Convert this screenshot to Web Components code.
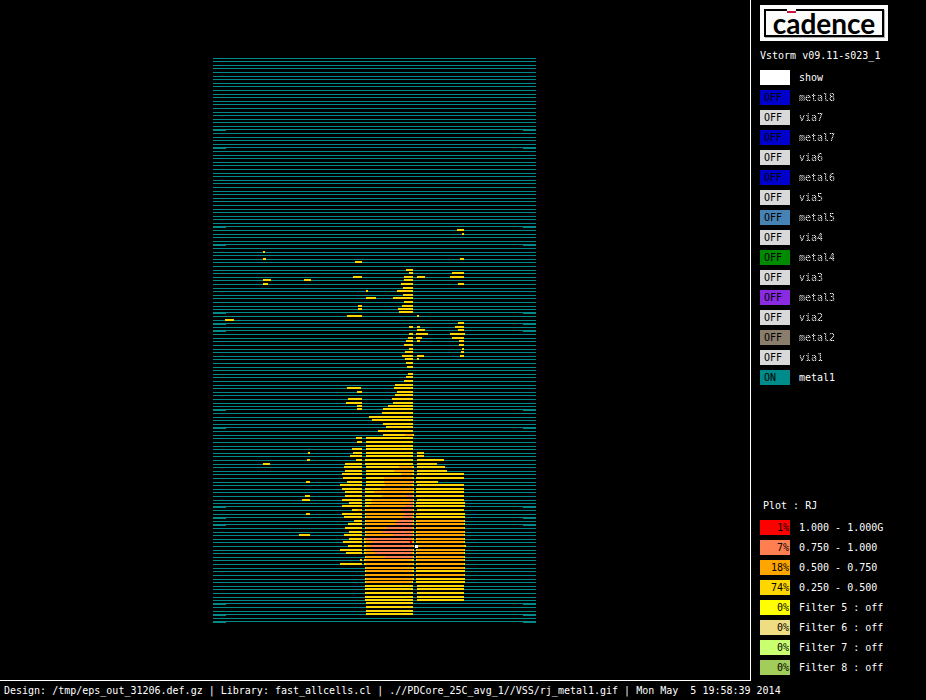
<!DOCTYPE html>
<html lang="en">
<head>
<meta charset="utf-8">
<title>Vstorm</title>
<style>
html, body { height: 100%; margin: 0; background: #000; }
body { color: #fff; font: 10px/14px "DejaVu Sans Mono", monospace; }
</style>
</head>
<body>
<vstorm-app></vstorm-app>
<script>
function define(name, html, setup) {
  const template = document.createElement('template');
  template.innerHTML = html;
  customElements.define(name, class extends HTMLElement {
    constructor() {
      super();
      this.attachShadow({ mode: 'open' }).append(template.content.cloneNode(true));
    }
    connectedCallback() {
      if (setup && !this.ready) { this.ready = true; setup(this, this.shadowRoot); }
    }
  });
}

define('brand-logo', `
<style>
:host { display: block; width: 128px; height: 36px; background: #fcfcfc; padding: 4px; box-sizing: border-box; }
.frame { position: relative; height: 100%; box-sizing: border-box; border: 2px solid #000;
  display: flex; align-items: center; justify-content: center; box-shadow: 1px 1px #aaa;
  color: #000; font: bold 28px/24px Lato, sans-serif; }
.bar { position: absolute; left: 21px; top: -2px; width: 9px; height: 2px; background: #fcfcfc; border-bottom: 2px solid #d0103a; }
</style>
<div class="frame"><span>cadence</span><span class="bar"></span></div>`);

define('swatch-row', `
<style>
:host { display: flex; align-items: center; gap: 9px; height: 15px; }
button { width: 30px; height: 15px; flex: none; margin: 0; border: 0; border-radius: 0; padding: 0 0 0 4px;
  font: inherit; color: #000; text-align: left; white-space: pre; }
:host([percent]) button { text-align: right; padding: 0 1px 0 0; }
label { white-space: pre; }
:host([off]) label { -webkit-mask: repeating-conic-gradient(#000 0 25%, #0006 0 50%) 0 0 / 2px 2px;
  mask: repeating-conic-gradient(#000 0 25%, #0006 0 50%) 0 0 / 2px 2px; }
</style>
<button id="b" type="button"></button><label for="b"><slot></slot></label>`, (host, root) => {
  const b = root.querySelector('button');
  b.textContent = host.getAttribute('state') || '';
  b.style.background = host.getAttribute('color');
});

define('rail-plot', `
<style>:host { display: block; line-height: 0; }</style>
<svg width="324" height="566" viewBox="213 57 324 566" shape-rendering="crispEdges" role="img" aria-label="RJ plot of metal1"></svg>`, (host, root) => {
  const svg = root.querySelector('svg');
  const rect = (x, y, w, h, fill) => {
    const r = document.createElementNS('http://www.w3.org/2000/svg', 'rect');
    for (const [k, v] of Object.entries({ x, y, width: w, height: h, fill })) r.setAttribute(k, v);
    svg.append(r);
  };
  // Rails repeat every 97 units in groups of 27, with a few rounded down by one.
  const group = [58, 61, 65, 68, 72, 76, 79, 83, 86, 90, 94, 97, 101, 104, 108, 112, 115, 119, 122, 126, 129, 133, 137, 140, 144, 147, 151];
  const rounded = [313, 331, 410, 428, 507, 525, 543, 561, 604, 622];
  const rails = Array.from({ length: 158 }, (_, k) => {
    const y = group[k % 27] + 97 * Math.floor(k / 27);
    return rounded.includes(y) ? y - 1 : y;
  });
  const strapped = [129, 147, 226, 244, 312, 323, 330, 409, 427, 506, 517, 524, 603, 614, 621];
  const nearest = y => rails.reduce((a, b) => Math.abs(b - y) < Math.abs(a - y) ? b : a);
  for (const y of rails) rect(213, y, 323, 1, '#008b8b');
  for (const s of strapped) {
    const y = nearest(s);
    rect(213, y, 13, 2, '#008b8b');
    rect(523, y, 13, 2, '#008b8b');
  }
  const fills = { y: '#ffd700', o: '#ffa500', c: '#ff7f50', r: '#ff0000' };
  // Each line: rail position, then spans start-end with an optional class letter.
  const data = `
230 457-464
234 462-464
252 263-265
259 263-266 460-464
262 355-362
270 406-413
273 409-413 452-464
277 353-362 404-413 417-425 450-464
280 263-271 304-311 404-413
284 263-268 401-413 458-464
288 403-413
291 366-368 397-413
295 403-413
298 366-376 393-413
302 404-413
306 358-362 402-413
309 358-362 398-413
312 399-413
316 347-362 417-419
320 225-234
323 458-464
327 409-413 417-420 455-464
330 417-425 458-464
334 409-413 416-428 450-465
338 408-413 416-422 452-464
341 406-413 417-420 459-464
345 404-413 459-464
349 409-413 462-464
352 405-413 461-464
356 402-413 417-424 460-464
359 405-413 417-419
363 406-413
367 407-413
374 408-413
377 406-413
381 404-413
385 395-413
388 347-361 394-413
392 357-362 397-413
395 395-413
399 348-362 392-413
403 346-362 393-413
406 357-362 388-413
409 357-362 383-413
413 382-413
417 369-413
420 372-413
424 383-413
427 386-413
431 378-413
435 383-414 405-412o
438 356-362 366-413
442 357-362 366-413
445 366-413
449 352-362 366-413
453 308-310 353-362 366-413 417-424
456 350-362 366-413 417-424
460 307-310 356-362 365-413 417-444
464 263-270 345-362 365-413 417-437
467 344-362 366-414 399-412o 417-445
471 345-362 366-414 394-413o 417-447
474 342-362 366-414 401-412o 417-464
478 343-362 366-414 384-412o 416-464
482 306-310 347-362 366-414 384-413o 410-413c 416-438
485 340-362 366-414 385-412o 417-464
489 342-362 365-414 381-413o 416-464
492 345-362 365-414 374-413o 416-464
496 305-310 345-362 365-414 382-413o 407-413c 416-464
500 302-310 342-362 365-414 372-413o 410-413c 417-464
503 349-362 365-414 371-413o 410-413c 416-465
506 342-362 365-414 369-413o 406-413c 416-465
510 352-362 358-361o 365-414 366-413o 401-412c 417-464
514 306-310 342-362 365-414 366-413o 405-413c 416-465 417-419o
517 344-362 365-414 366-413o 403-412c 416-465
521 354-362 365-414 366-413o 397-413c 416-465 417-464o
524 348-362 365-414 366-413o 395-412c 416-465 417-464o
528 345-362 365-414 366-413o 387-413c 416-465 417-464o
532 349-362 365-414 366-413o 382-412c 416-465 417-464o
535 299-310 344-362 365-414 366-413o 393-413c 416-465 417-464o
539 349-362 364-414 365-413o 366-412c 416-465 417-464o
542 343-362 364-414 366-413o 372-412c 410-412r 416-465 417-464o
546 348-362 364-414 366-413o 370-413c 416-466 417-464o
550 340-362 364-414 366-413o 372-413c 416-465 417-464o
553 346-362 364-414 366-413o 375-412c 416-465 417-464o
557 365-414 366-413o 385-413c 416-465 417-464o
560 360-362 364-414 366-412o 416-465 417-464o
564 340-362 364-414 366-413o 416-465 417-464o
568 365-414 366-412o 416-465 417-464o
571 365-414 366-412o 416-465
575 365-414 366-413o 416-465 417-464o
579 365-414 366-412o 416-465
582 365-413 366-412o 416-465
586 365-413 417-464
589 365-413 417-464
593 365-413 417-464
597 365-413 417-464
600 365-413 417-464
603 366-413
607 366-413
611 366-413
614 366-413`;
  for (const row of data.trim().split('\n')) {
    const [at, ...spans] = row.split(' ');
    const y = nearest(+at) - 1;
    for (const span of spans) {
      const [, a, b, c] = span.match(/(\d+)-(\d+)(\w?)/);
      rect(+a, y, b - a, 2, fills[c || 'y']);
    }
  }
  rect(415, 545, 3, 3, '#fff');
});

define('vstorm-app', `
<style>
:host { display: grid; grid-template-columns: minmax(0, 1fr) 176px; grid-template-rows: minmax(0, 1fr) 19px; min-height: 100vh; }
main { display: flex; align-items: center; justify-content: center; border-bottom: 1px solid #fff; }
aside { display: flex; flex-direction: column; justify-content: space-between; border-left: 1px solid #fff;
  padding: 5px 9px 6px 9px; }
section { display: flex; flex-direction: column; gap: 5px; }
h1, h2 { margin: 0; font: inherit; }
h1 { padding: 3px 0 2px; }
h2 { padding: 0 3px 2px; }
footer { grid-column: 1 / -1; padding: 3px 4px 0; white-space: pre; }
</style>
<main><rail-plot></rail-plot></main>
<aside>
  <section id="layers"><brand-logo></brand-logo><h1>Vstorm v09.11-s023_1</h1></section>
  <section id="filters"><h2>Plot : RJ</h2></section>
</aside>
<footer>Design: /tmp/eps_out_31206.def.gz | Library: fast_allcells.cl | .//PDCore_25C_avg_1//VSS/rj_metal1.gif | Mon May  5 19:58:39 2014</footer>`, (host, root) => {
  const add = (section, text, color, state, flag) => {
    const row = document.createElement('swatch-row');
    row.textContent = text;
    row.setAttribute('color', color);
    row.setAttribute('state', state);
    if (flag) row.setAttribute(flag, '');
    root.getElementById(section).append(row);
  };
  add('layers', 'show', '#fff', '');
  const metals = { 8: '#0000cd', 7: '#0000cd', 6: '#0000cd', 5: '#4682b4', 4: '#008b00', 3: '#8a2be2', 2: '#8b7d6b' };
  for (let n = 8; n > 1; n--) {
    add('layers', 'metal' + n, metals[n], 'OFF', 'off');
    add('layers', 'via' + (n - 1), '#d9d9d9', 'OFF', 'off');
  }
  add('layers', 'metal1', '#008b8b', 'ON');
  [['1.000 - 1.000G', '#ff0000', '1%'], ['0.750 - 1.000', '#ff7f50', '7%'], ['0.500 - 0.750', '#ffa500', '18%'],
   ['0.250 - 0.500', '#ffd700', '74%'], ['Filter 5 : off', '#ffff00', '0%'], ['Filter 6 : off', '#eedd82', '0%'],
   ['Filter 7 : off', '#caff70', '0%'], ['Filter 8 : off', '#a2cd5a', '0%']]
    .forEach(([text, color, state]) => add('filters', text, color, state, 'percent'));
});
</script>
</body>
</html>
